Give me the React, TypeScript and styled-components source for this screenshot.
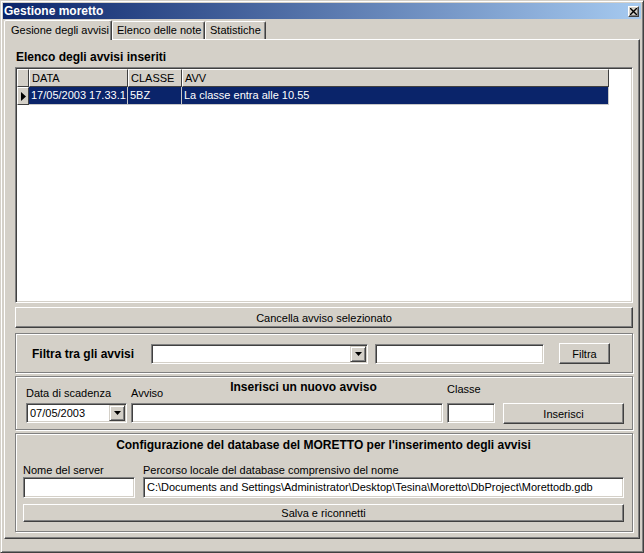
import styled, { createGlobalStyle } from 'styled-components'

const GlobalStyle = createGlobalStyle`
  html, body {
    margin: 0;
    padding: 0;
    background: #d4d0c8;
  }
  body {
    font-family: "Liberation Sans", Arial, sans-serif;
    font-size: 11px;
    color: #000;
  }
`

const columns = [
  { key: 'data', label: 'DATA', width: 99 },
  { key: 'classe', label: 'CLASSE', width: 54 },
  { key: 'avv', label: 'AVV', width: 427 },
]

const rows = [
  { data: '17/05/2003 17.33.1', classe: '5BZ', avv: 'La classe entra alle 10.55' },
]

const ArrowDown = () => (
  <svg width='7' height='4' viewBox='0 0 7 4'>
    <path d='M0 0h7L3.5 4z' fill='#000' />
  </svg>
)

const App = () => {
  return (
    <>
      <GlobalStyle />
      <Window>
        <TitleBar>
          <Caption>Gestione moretto</Caption>
          <CloseBox>
            <svg width='7' height='7' viewBox='0 0 7 7'>
              <path d='M0 0l7 7M7 0L0 7' stroke='#000' strokeWidth='1.4' />
            </svg>
          </CloseBox>
        </TitleBar>

        <TabStrip>
          <Tab $active $w={108}>Gesione degli avvisi</Tab>
          <Tab $w={93}>Elenco delle note</Tab>
          <Tab $w={61}>Statistiche</Tab>
        </TabStrip>

        <TabPanel>
          <SectionTitle>Elenco degli avvisi inseriti</SectionTitle>

          <DataGrid>
            <GridLine>
              <HeadCell $w={12} />
              {columns.map((c) => (
                <HeadCell key={c.key} $w={c.width}>{c.label}</HeadCell>
              ))}
            </GridLine>
            {rows.map((r, i) => (
              <GridLine key={i}>
                <Indicator>
                  <svg width='5' height='9' viewBox='0 0 5 9'>
                    <path d='M0 0l5 4.5L0 9z' fill='#000' />
                  </svg>
                </Indicator>
                <Cell $w={99}>{r.data}</Cell>
                <Cell $w={54}>{r.classe}</Cell>
                <Cell $w={427}>{r.avv}</Cell>
              </GridLine>
            ))}
          </DataGrid>

          <WideButton $h={21}>Cancella avviso selezionato</WideButton>

          <FilterGroup>
            <BoldLabel $w={119}>Filtra tra gli avvisi</BoldLabel>
            <Combo $w={217}>
              <ComboText />
              <ComboArrow><ArrowDown /></ComboArrow>
            </Combo>
            <TextField $w={169} $ml={7} />
            <PushButton $w={51} $ml={15}>Filtra</PushButton>
          </FilterGroup>

          <InsertGroup>
            <GroupHeading $shiftLeft={43}>Inserisci un nuovo avviso</GroupHeading>
            <FieldLabel $col={1}>Data di scadenza</FieldLabel>
            <FieldLabel $col={2}>Avviso</FieldLabel>
            <FieldLabel $col={3} $raise={4}>Classe</FieldLabel>
            <Combo $w={101}>
              <ComboText>07/05/2003</ComboText>
              <ComboArrow><ArrowDown /></ComboArrow>
            </Combo>
            <TextField />
            <TextField />
            <PushButton>Inserisci</PushButton>
          </InsertGroup>

          <ConfigGroup>
            <GroupHeading $top={4}>Configurazione del database del MORETTO per l'inserimento degli avvisi</GroupHeading>
            <FieldLabel $col={1}>Nome del server</FieldLabel>
            <FieldLabel $col={2}>Percorso locale del database comprensivo del nome</FieldLabel>
            <TextField $h={21} />
            <TextField $h={21}>C:\Documents and Settings\Administrator\Desktop\Tesina\Moretto\DbProject\Morettodb.gdb</TextField>
            <SpanButton>Salva e riconnetti</SpanButton>
          </ConfigGroup>
        </TabPanel>
      </Window>
    </>
  )
}

const raised = `
  border: 1px solid;
  border-color: #fff #404040 #404040 #fff;
  box-shadow: inset -1px -1px #808080;
`

const sunken = `
  border: 1px solid;
  border-color: #808080 #fff #fff #808080;
  box-shadow: inset 1px 1px #404040, inset -1px -1px #d4d0c8;
`

const etched = `
  border: 1px solid #808080;
  box-shadow: inset 1px 1px #fff, 1px 1px #fff;
`

const Window = styled.div`
  box-sizing: border-box;
  width: 644px;
  height: 553px;
  display: flex;
  flex-direction: column;
  background: #d4d0c8;
  border: 1px solid;
  border-color: #d4d0c8 #404040 #404040 #d4d0c8;
  box-shadow: inset 1px 1px #fff, inset -1px -1px #808080;
  padding: 2px;
`

const TitleBar = styled.div`
  height: 16px;
  display: flex;
  align-items: center;
  justify-content: space-between;
  padding: 0 2px 0 1px;
  background: linear-gradient(to right, #0a246a, #a6caf0);
`

const Caption = styled.div`
  color: #fff;
  font-weight: bold;
  font-size: 12px;
  line-height: 16px;
`

const CloseBox = styled.div`
  box-sizing: border-box;
  width: 11px;
  height: 11px;
  display: flex;
  align-items: center;
  justify-content: center;
  background: #d4d0c8;
  ${raised}
`

const TabStrip = styled.div`
  height: 20px;
  display: flex;
  align-items: flex-end;
  padding-left: 1px;
  position: relative;
  z-index: 1;
`

const Tab = styled.div<{ $active?: boolean, $w: number }>`
  box-sizing: border-box;
  width: ${(p) => p.$w}px;
  height: ${(p) => (p.$active ? 20 : 18)}px;
  margin-bottom: ${(p) => (p.$active ? -1 : 0)}px;
  padding: ${(p) => (p.$active ? '2px 0 0 6px' : '1px 0 0 4px')};
  background: #d4d0c8;
  border: 1px solid;
  border-bottom: none;
  border-color: #fff #404040 transparent #fff;
  box-shadow: inset -1px 0 #808080;
  border-radius: 2px 2px 0 0;
  white-space: nowrap;
  line-height: 14px;
`

const TabPanel = styled.div`
  box-sizing: border-box;
  height: 500px;
  margin: 0 1px;
  display: flex;
  flex-direction: column;
  padding: 11px 6px 0 10px;
  border: 1px solid;
  border-color: #fff #404040 #404040 #fff;
  box-shadow: inset -1px -1px #808080;
`

const SectionTitle = styled.div`
  height: 16px;
  font-weight: bold;
  font-size: 12px;
  line-height: 13px;
  padding-left: 1px;
`

const DataGrid = styled.div`
  box-sizing: border-box;
  height: 236px;
  background: #fff;
  ${sunken}
  padding: 1px;
  display: flex;
  flex-direction: column;
  overflow: hidden;
`

const GridLine = styled.div`
  display: flex;
  height: 18px;
  flex-shrink: 0;
`

const HeadCell = styled.div<{ $w: number }>`
  box-sizing: border-box;
  width: ${(p) => p.$w}px;
  flex-shrink: 0;
  background: #d4d0c8;
  border-top: 1px solid #fff;
  border-left: 1px solid #fff;
  border-right: 1px solid #404040;
  border-bottom: 1px solid #404040;
  padding-left: 2px;
  line-height: 16px;
  white-space: nowrap;
`

const Indicator = styled(HeadCell).attrs({ $w: 12 })`
  display: flex;
  align-items: center;
  justify-content: center;
  padding-left: 0;
`

const Cell = styled.div<{ $w: number }>`
  box-sizing: border-box;
  width: ${(p) => p.$w}px;
  flex-shrink: 0;
  background: #0a246a;
  color: #fff;
  border-right: 1px solid #c8c8c8;
  border-bottom: 1px solid #c8c8c8;
  padding-left: 2px;
  line-height: 17px;
  white-space: nowrap;
  overflow: hidden;
`

const buttonBase = `
  box-sizing: border-box;
  background: #d4d0c8;
  display: flex;
  align-items: center;
  justify-content: center;
  white-space: nowrap;
  ${raised}
`

const WideButton = styled.div<{ $h: number }>`
  ${buttonBase}
  height: ${(p) => p.$h}px;
  margin-top: 4px;
`

const PushButton = styled.div<{ $w?: number, $ml?: number }>`
  ${buttonBase}
  height: 21px;
  ${(p) => (p.$w ? `width: ${p.$w}px;` : '')}
  margin-left: ${(p) => p.$ml ?? 0}px;
`

const SpanButton = styled.div`
  ${buttonBase}
  grid-column: 1 / span 2;
  height: 18px;
  margin-top: 6px;
`

const FilterGroup = styled.div`
  box-sizing: border-box;
  height: 40px;
  margin-top: 5px;
  display: flex;
  align-items: center;
  padding: 1px 0 0 16px;
  ${etched}
`

const BoldLabel = styled.div<{ $w: number }>`
  width: ${(p) => p.$w}px;
  font-weight: bold;
  font-size: 12px;
`

const TextField = styled.div<{ $w?: number, $ml?: number, $h?: number }>`
  box-sizing: border-box;
  ${(p) => (p.$w ? `width: ${p.$w}px;` : '')}
  height: ${(p) => p.$h ?? 20}px;
  margin-left: ${(p) => p.$ml ?? 0}px;
  background: #fff;
  ${sunken}
  padding: 0 3px;
  line-height: 18px;
  white-space: nowrap;
  overflow: hidden;
`

const Combo = styled.div<{ $w: number }>`
  box-sizing: border-box;
  width: ${(p) => p.$w}px;
  height: 20px;
  display: flex;
  background: #fff;
  ${sunken}
  padding: 1px;
`

const ComboText = styled.div`
  flex: 1;
  padding-left: 2px;
  line-height: 16px;
`

const ComboArrow = styled.div`
  box-sizing: border-box;
  width: 16px;
  display: flex;
  align-items: center;
  justify-content: center;
  background: #d4d0c8;
  border: 1px solid;
  border-color: #d4d0c8 #404040 #404040 #d4d0c8;
  box-shadow: inset 1px 1px #fff, inset -1px -1px #808080;
`

const InsertGroup = styled.div`
  box-sizing: border-box;
  height: 54px;
  margin-top: 3px;
  display: grid;
  grid-template-columns: 101px 312px 48px 125px;
  grid-template-rows: 25px 21px;
  column-gap: 4px;
  padding: 1px 0 0 10px;
  ${etched}

  & > :last-child {
    margin-left: 4px;
  }
`

const GroupHeading = styled.div<{ $shiftLeft?: number, $top?: number }>`
  grid-row: 1;
  grid-column: 1 / -1;
  justify-self: center;
  align-self: start;
  margin-top: ${(p) => p.$top ?? 2}px;
  padding-right: ${(p) => p.$shiftLeft ?? 0}px;
  font-weight: bold;
  font-size: 12px;
  line-height: 14px;
`

const FieldLabel = styled.div<{ $col: number, $raise?: number }>`
  grid-row: 2;
  grid-column: ${(p) => p.$col};
  align-self: end;
  line-height: 13px;
  margin-bottom: ${(p) => p.$raise ?? 0}px;
  white-space: nowrap;

  ${InsertGroup} & {
    grid-row: 1;
    margin-bottom: ${(p) => 3 + (p.$raise ?? 0)}px;
  }
`

const ConfigGroup = styled.div`
  box-sizing: border-box;
  height: 99px;
  margin-top: 3px;
  display: grid;
  grid-template-columns: 112px 481px;
  grid-template-rows: 30px 13px 21px auto;
  column-gap: 8px;
  padding: 0 0 0 7px;
  ${etched}
`

export default App
